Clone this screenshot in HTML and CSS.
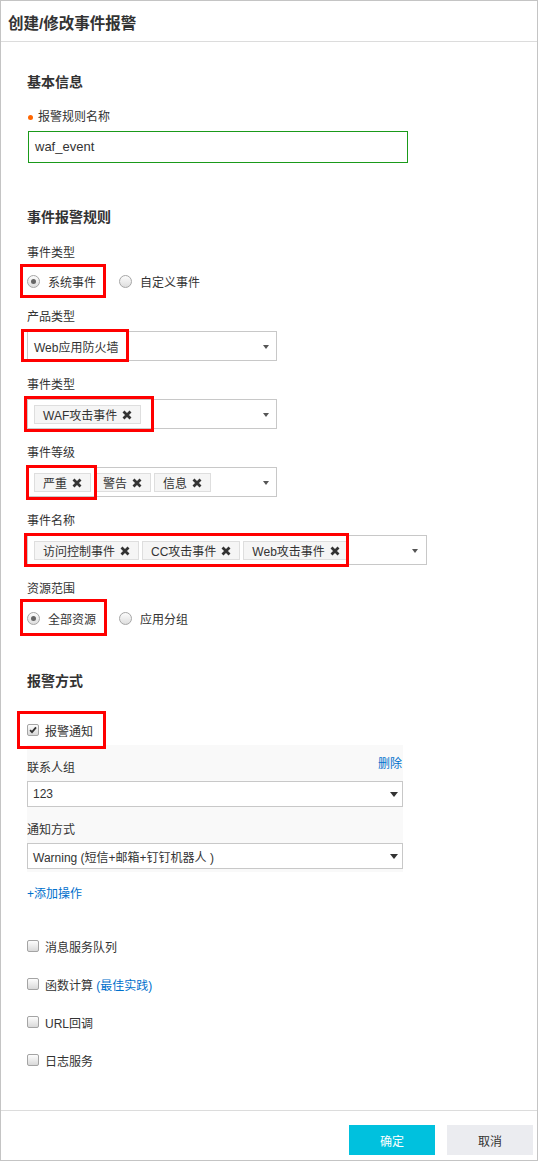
FILE: index.html
```html
<!DOCTYPE html>
<html lang="zh-CN">
<head>
    <meta charset="UTF-8">
    <meta name="viewport" content="width=device-width, initial-scale=1.0">
    <title>创建/修改事件报警</title>
    <link rel="stylesheet" href="styles.css">
</head>
<body>
    <div class="dialog">
        <div class="dialog-header">创建/修改事件报警</div>

        <div class="dialog-body">
            <div class="section-title">基本信息</div>
            <div class="field first">
                <div class="label"><span class="required"></span>报警规则名称</div>
                <div class="text-input">waf_event</div>
            </div>

            <div class="section-title spaced">事件报警规则</div>
            <div class="field wide">
                <div class="label">事件类型</div>
                <div class="radio-row">
                    <span class="radio checked"></span><span class="radio-text">系统事件</span>
                    <span class="radio"></span><span class="radio-text">自定义事件</span>
                </div>
                <span class="mark mark-1"></span>
            </div>
            <div class="field wide">
                <div class="label">产品类型</div>
                <div class="select">
                    <span class="select-value">Web应用防火墙</span>
                    <span class="arrow"></span>
                </div>
                <span class="mark mark-2"></span>
            </div>
            <div class="field">
                <div class="label">事件类型</div>
                <div class="select">
                    <span class="tag">WAF攻击事件<span class="tag-x"><svg viewBox="0 0 10 10"><path d="M1.5 1.5L8.5 8.5M8.5 1.5L1.5 8.5"/></svg></span></span>
                    <span class="arrow"></span>
                </div>
                <span class="mark mark-3"></span>
            </div>
            <div class="field">
                <div class="label">事件等级</div>
                <div class="select">
                    <span class="tag">严重<span class="tag-x"><svg viewBox="0 0 10 10"><path d="M1.5 1.5L8.5 8.5M8.5 1.5L1.5 8.5"/></svg></span></span>
                    <span class="tag">警告<span class="tag-x"><svg viewBox="0 0 10 10"><path d="M1.5 1.5L8.5 8.5M8.5 1.5L1.5 8.5"/></svg></span></span>
                    <span class="tag">信息<span class="tag-x"><svg viewBox="0 0 10 10"><path d="M1.5 1.5L8.5 8.5M8.5 1.5L1.5 8.5"/></svg></span></span>
                    <span class="arrow"></span>
                </div>
                <span class="mark mark-4"></span>
            </div>
            <div class="field">
                <div class="label">事件名称</div>
                <div class="select long">
                    <span class="tag">访问控制事件<span class="tag-x"><svg viewBox="0 0 10 10"><path d="M1.5 1.5L8.5 8.5M8.5 1.5L1.5 8.5"/></svg></span></span>
                    <span class="tag">CC攻击事件<span class="tag-x"><svg viewBox="0 0 10 10"><path d="M1.5 1.5L8.5 8.5M8.5 1.5L1.5 8.5"/></svg></span></span>
                    <span class="tag">Web攻击事件<span class="tag-x"><svg viewBox="0 0 10 10"><path d="M1.5 1.5L8.5 8.5M8.5 1.5L1.5 8.5"/></svg></span></span>
                    <span class="arrow"></span>
                </div>
                <span class="mark mark-5"></span>
            </div>
            <div class="field">
                <div class="label">资源范围</div>
                <div class="radio-row loose">
                    <span class="radio checked"></span><span class="radio-text">全部资源</span>
                    <span class="radio"></span><span class="radio-text">应用分组</span>
                </div>
                <span class="mark mark-6"></span>
            </div>

            <div class="section-title spaced-2">报警方式</div>
            <div class="check-row notify">
                <span class="checkbox"><svg viewBox="0 0 12 12"><path d="M2.5 6.2L4.8 8.6L9.6 2.8"/></svg></span>
                <span>报警通知</span>
                <span class="mark mark-7"></span>
            </div>
            <div class="notify-panel">
                <div class="panel-label">
                    <span>联系人组</span>
                    <a class="link delete">删除</a>
                </div>
                <div class="panel-select">
                    <span>123</span>
                    <span class="arrow big"></span>
                </div>
                <div class="panel-label second">
                    <span>通知方式</span>
                </div>
                <div class="panel-select">
                    <span>Warning (短信+邮箱+钉钉机器人 )</span>
                    <span class="arrow big"></span>
                </div>
            </div>
            <a class="link add-action">+添加操作</a>

            <div class="check-list">
                <div class="check-row"><span class="checkbox"></span><span>消息服务队列</span></div>
                <div class="check-row"><span class="checkbox"></span><span>函数计算 <span class="blue">(最佳实践)</span></span></div>
                <div class="check-row"><span class="checkbox"></span><span>URL回调</span></div>
                <div class="check-row"><span class="checkbox"></span><span>日志服务</span></div>
            </div>
        </div>

        <div class="dialog-footer">
            <button class="btn btn-primary">确定</button>
            <button class="btn btn-default">取消</button>
        </div>
    </div>
</body>
</html>
```

FILE: styles.css
```css
body {
    margin: 0;
    font-family: "Liberation Sans", "Noto Sans CJK SC", sans-serif;
    font-size: 12px;
    color: #333;
    background-color: #fff;
}
.dialog {
    width: 538px;
    height: 1161px;
    box-sizing: border-box;
    border: 1px solid #c4c4c4;
    display: flex;
    flex-direction: column;
    background-color: #fff;
}
.dialog-header {
    height: 41px;
    box-sizing: border-box;
    padding: 12px 0 0 7px;
    line-height: 22px;
    font-size: 15.5px;
    font-weight: bold;
    color: #333;
    border-bottom: 1px solid #dcdcdc;
}
.dialog-body {
    flex: 1;
    padding: 30px 0 0 26px;
}
.section-title {
    font-size: 14px;
    font-weight: bold;
    line-height: 20px;
}
.section-title.spaced {
    margin-top: 44px;
}
.section-title.spaced-2 {
    margin-top: 43px;
}
.field {
    position: relative;
    margin-top: 14px;
}
.field.first {
    margin-top: 15px;
}
.field.wide {
    margin-top: 16px;
}
.label {
    line-height: 20px;
    margin-bottom: 4px;
    display: flex;
    align-items: center;
}
.required {
    width: 5px;
    height: 5px;
    border-radius: 50%;
    background-color: #f60;
    margin: 0 5px 0 1px;
}
.text-input {
    margin-left: 1px;
    width: 380px;
    height: 32px;
    box-sizing: border-box;
    border: 1px solid #1a9a1a;
    padding-left: 6px;
    line-height: 30px;
    font-size: 13px;
}

/* radios */
.radio-row {
    display: flex;
    align-items: center;
    height: 20px;
    margin-top: 8px;
}
.radio-row.loose {
    margin-top: 9px;
}
.radio {
    width: 13px;
    height: 13px;
    box-sizing: border-box;
    border: 1px solid #a6a6a6;
    border-radius: 50%;
    background: linear-gradient(#fcfcfc, #dedede);
    display: flex;
    align-items: center;
    justify-content: center;
}
.radio.checked::after {
    content: "";
    width: 5px;
    height: 5px;
    border-radius: 50%;
    background-color: #666;
}
.radio-text {
    margin-left: 8px;
    margin-right: 23px;
}

/* selects */
.select {
    width: 250px;
    height: 30px;
    box-sizing: border-box;
    border: 1px solid #c8c8c8;
    display: flex;
    align-items: center;
    gap: 3px;
    padding: 1px 7px 0 6px;
}
.select.long {
    width: 400px;
    padding-right: 8px;
}
.select-value {
    flex: 1;
}
.arrow {
    margin-left: auto;
    width: 0;
    height: 0;
    border-left: 3px solid transparent;
    border-right: 3px solid transparent;
    border-top: 4px solid #555;
}
.arrow.big {
    border-left-width: 4px;
    border-right-width: 4px;
    border-top: 5px solid #333;
}
.tag {
    display: inline-flex;
    align-items: center;
    height: 19px;
    box-sizing: border-box;
    padding: 0 8px;
    background-color: #f5f5f5;
    border: 1px solid #dedede;
    white-space: nowrap;
}
.tag-x {
    display: inline-flex;
    margin-left: 5px;
}
.tag-x svg {
    width: 10px;
    height: 10px;
    stroke: #333;
    stroke-width: 2.8;
    fill: none;
}

/* annotation boxes */
.mark {
    position: absolute;
    box-sizing: border-box;
    border: 3px solid #f00;
    pointer-events: none;
}
.mark-1 { left: -7px; top: 21px; width: 86px; height: 34px; }
.mark-2 { left: -6px; top: 22px; width: 108px; height: 33px; }
.mark-3 { left: -3px; top: 21px; width: 130px; height: 36px; }
.mark-4 { left: -1px; top: 22px; width: 71px; height: 35px; }
.mark-5 { left: -3px; top: 22px; width: 325px; height: 34px; }
.mark-6 { left: -7px; top: 20px; width: 87px; height: 37px; }
.mark-7 { left: -10px; top: -9px; width: 89px; height: 38px; }

/* checkboxes */
.check-row {
    position: relative;
    display: flex;
    align-items: center;
    height: 20px;
    margin-top: 18px;
}
.check-row.notify {
    width: 80px;
    margin-top: 29px;
}
.check-list .check-row:first-child {
    margin-top: 32px;
}
.checkbox {
    width: 12px;
    height: 12px;
    box-sizing: border-box;
    border: 1px solid #a4a4a4;
    border-radius: 2px;
    background: linear-gradient(#fdfdfd, #d9d9d9);
    margin-right: 6px;
    display: flex;
}
.checkbox svg {
    width: 10px;
    height: 10px;
    fill: none;
    stroke: #333;
    stroke-width: 2.2;
}

.notify-panel {
    width: 376px;
    margin-top: 5px;
    padding: 13px 0 3px;
    background-color: #f9f9f9;
}
.panel-label {
    display: flex;
    justify-content: space-between;
    align-items: flex-start;
    line-height: 20px;
}
.panel-label.second {
    margin-top: 13px;
}
.panel-select {
    margin-top: 3px;
    height: 26px;
    box-sizing: border-box;
    border: 1px solid #c8c8c8;
    background-color: #fff;
    display: flex;
    align-items: center;
    padding: 0 4px 0 5px;
}
.link, .blue {
    color: #0070cc;
    text-decoration: none;
}
.link.delete {
    line-height: 12px;
    margin-right: 1px;
}
.add-action {
    display: block;
    margin-top: 12px;
    line-height: 20px;
}

.dialog-footer {
    height: 50px;
    box-sizing: border-box;
    border-top: 1px solid #dcdcdc;
    padding: 14px 4px 0 0;
    display: flex;
    justify-content: flex-end;
    align-items: flex-start;
    gap: 12px;
}
.btn {
    width: 86px;
    height: 30px;
    border: none;
    font-family: inherit;
    font-size: 12px;
    cursor: pointer;
}
.btn-primary {
    background-color: #00c1de;
    color: #fff;
}
.btn-default {
    background-color: #ebecf0;
    color: #333;
}
```
